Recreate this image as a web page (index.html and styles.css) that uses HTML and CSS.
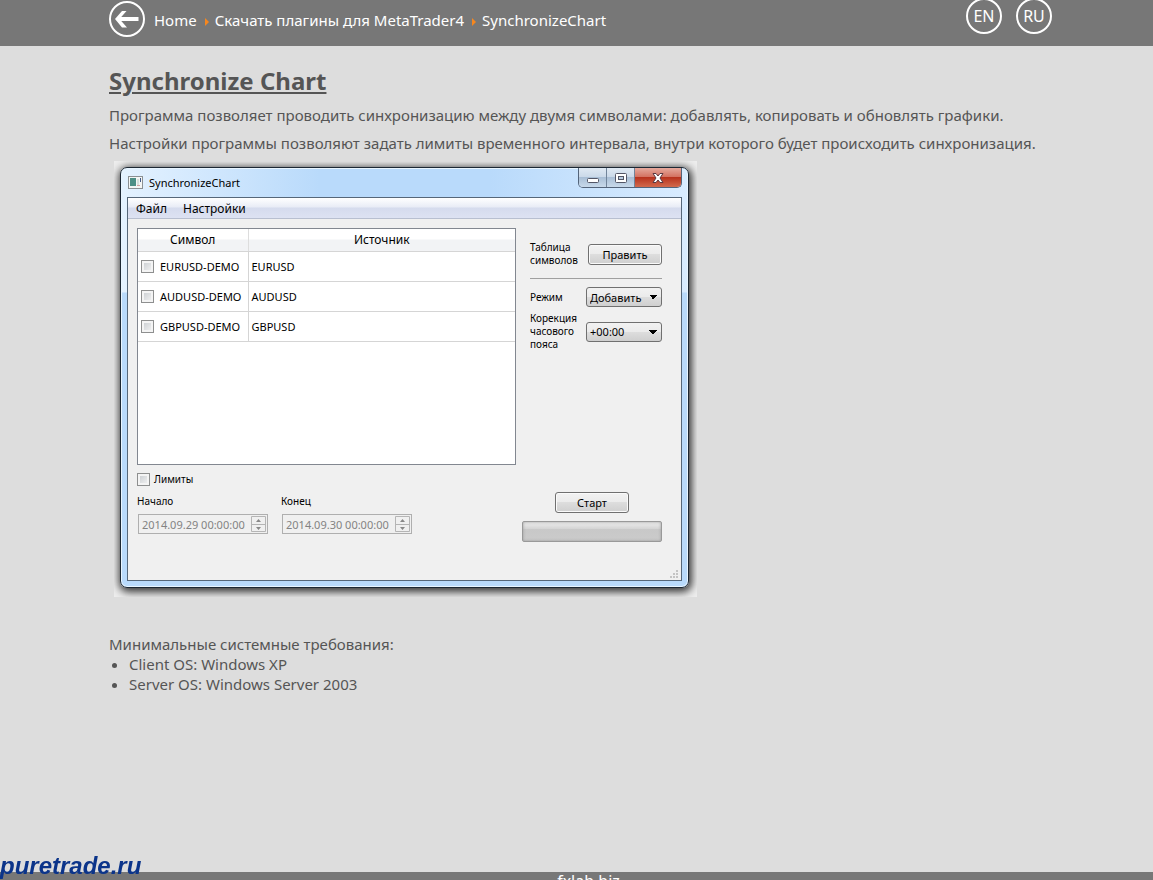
FILE: index.html
```
<!DOCTYPE html>
<html lang="ru">
<head>
  <meta charset="UTF-8">
  <meta name="viewport" content="width=device-width, initial-scale=1.0">
  <title>SynchronizeChart</title>
  <link rel="stylesheet" href="styles.css">
</head>
<body>

<!-- Top bar -->
<header class="topbar">
  <a class="back" href="#" aria-label="Назад">
    <svg width="36" height="36" viewBox="0 0 36 36" fill="none" stroke="#fff">
      <circle cx="18" cy="18" r="17" stroke-width="2"/>
      <path d="M29.500 18H9" stroke-width="4"/>
      <path d="M17.500 10H13L6 18L13 26.500H18L10.500 18Z" fill="#fff" stroke="none"/>
    </svg>
  </a>
  <nav class="crumbs">
    <a href="#">Home</a>
    <a href="#">Скачать плагины для MetaTrader4</a>
    <a href="#">SynchronizeChart</a>
  </nav>
  <div class="langs">
    <a href="#">EN</a>
    <a href="#">RU</a>
  </div>
</header>

<main class="content">
  <h1>Synchronize Chart</h1>
  <p>Программа позволяет проводить синхронизацию между двумя символами: добавлять, копировать и обновлять графики.</p>
  <p>Настройки программы позволяют задать лимиты временного интервала, внутри которого будет происходить синхронизация.</p>

  <!-- Program window -->
  <div class="shot">
    <div class="window">
      <div class="titlebar">
        <svg class="app-icon" width="15" height="13" viewBox="0 0 15 13">
          <rect x="0.500" y="0.500" width="14" height="12" fill="#f4f6f5" stroke="#8b9093"/>
          <rect x="2" y="2" width="6" height="8" fill="#4d8f86"/>
          <path d="M9 3h2v6h-2z" fill="#d5e0dc"/>
          <path d="M12 2h1v4h-1z" fill="#455b87"/>
          <path d="M9 9h3v1h-3z" fill="#d0a0a0"/>
        </svg>
        <span class="title">SynchronizeChart</span>
        <div class="win-buttons">
          <button type="button" aria-label="Свернуть">
            <svg width="14" height="12" viewBox="0 0 14 12"><rect x="1.500" y="6.500" width="11" height="4" rx="1" fill="#fff" stroke="#535666"/></svg>
          </button>
          <button type="button" aria-label="Развернуть">
            <svg width="14" height="12" viewBox="0 0 14 12" fill="#fff" stroke="#535666"><rect x="1.500" y="1.500" width="11" height="9" rx="1"/><rect x="4.500" y="4.500" width="5" height="3" fill="#b9cde0"/></svg>
          </button>
          <button type="button" class="close" aria-label="Закрыть">
            <svg width="14" height="12" viewBox="0 0 14 12"><path d="M2 1.500h3l2 2.500 2-2.500h3L9 6l3 4.500H9L7 8l-2 2.500H2L5 6z" fill="#fff" stroke="#5b3a42"/></svg>
          </button>
        </div>
      </div>

      <div class="client">
        <div class="menubar">
          <button type="button">Файл</button>
          <button type="button">Настройки</button>
        </div>
        <div class="panes">
          <div class="left">
            <div class="list">
              <table>
                <thead>
                  <tr><th class="symbol">Символ</th><th>Источник</th></tr>
                </thead>
                <tbody>
                  <tr>
                    <td><label><input type="checkbox">EURUSD-DEMO</label></td>
                    <td>EURUSD</td>
                  </tr>
                  <tr>
                    <td><label><input type="checkbox">AUDUSD-DEMO</label></td>
                    <td>AUDUSD</td>
                  </tr>
                  <tr>
                    <td><label><input type="checkbox">GBPUSD-DEMO</label></td>
                    <td>GBPUSD</td>
                  </tr>
                </tbody>
              </table>
            </div>
            <label class="limits"><input type="checkbox">Лимиты</label>
            <div class="dates">
              <div class="date">
                <label for="from">Начало</label>
                <div class="spin">
                  <input type="text" id="from" value="2014.09.29 00:00:00" disabled>
                  <svg width="15" height="16" viewBox="0 0 15 16"><path d="M0.500 0.500h14v15h-14zM0 8.500h15" fill="none" stroke="#b5b5b5"/><path d="M5 6l2.500-3L10 6zM5 11l2.500 3 2.500-3z" fill="#888"/></svg>
                </div>
              </div>
              <div class="date">
                <label for="to">Конец</label>
                <div class="spin">
                  <input type="text" id="to" value="2014.09.30 00:00:00" disabled>
                  <svg width="15" height="16" viewBox="0 0 15 16"><path d="M0.500 0.500h14v15h-14zM0 8.500h15" fill="none" stroke="#b5b5b5"/><path d="M5 6l2.500-3L10 6zM5 11l2.500 3 2.500-3z" fill="#888"/></svg>
                </div>
              </div>
            </div>
          </div>

          <div class="right">
            <div class="options">
              <div class="row edit">
                <span>Таблица символов</span>
                <button type="button" class="btn">Править</button>
              </div>
              <div class="row mode">
                <label for="mode">Режим</label>
                <select id="mode"><option>Добавить</option></select>
              </div>
              <div class="row zone">
                <label for="zone">Корекция часового пояса</label>
                <select id="zone"><option>+00:00</option></select>
              </div>
            </div>
            <div class="run">
              <button type="button" class="btn">Старт</button>
              <div class="progress" role="progressbar" aria-label="Прогресс"></div>
            </div>
          </div>
        </div>
        <svg class="grip" width="8" height="8" viewBox="0 0 8 8" fill="#c4c4c4">
          <path d="M6 0h2v2h-2zM3 3h2v2h-2zM6 3h2v2h-2zM0 6h2v2h-2zM3 6h2v2h-2zM6 6h2v2h-2z"/>
        </svg>
      </div>
    </div>
  </div>

  <div class="requirements">
    Минимальные системные требования:
    <ul>
      <li>Client OS: Windows XP</li>
      <li>Server OS: Windows Server 2003</li>
    </ul>
  </div>
</main>

<footer class="footer"><a href="#">fxlab.biz</a></footer>
<div class="watermark">puretrade.ru</div>

</body>
</html>
```
FILE: styles.css
```
* { margin: 0; padding: 0; box-sizing: border-box; }
body {
  background: #ddd;
  color: #555;
  font: 15px/20px "Noto Sans", sans-serif;
  height: 100vh;
  overflow: hidden;
}
a { color: white; text-decoration: none; }
svg { display: block; flex-shrink: 0; }
button, input, select { font: inherit; color: inherit; }

/* Top bar */
.topbar {
  display: flex;
  align-items: flex-start;
  height: 46px;
  padding: 0 101px 0 109px;
  background: #777;
}
.back { margin-top: 1px; }
.crumbs {
  display: flex;
  flex: 1;
  margin: 10px 0 0 9px;
}
.crumbs a + a::before {
  content: "";
  display: inline-block;
  margin: 0 6px 0 8px;
  border: 4px solid transparent;
  border-left-color: #f7871e;
  border-right: 0;
}
.langs { display: flex; gap: 14px; }
.langs a {
  width: 36px;
  height: 36px;
  margin-top: -2px;
  border: 2px solid white;
  border-radius: 50%;
  font-size: 16px;
  line-height: 32px;
  text-align: center;
}

/* Content */
.content {
  min-height: calc(100vh - 54px);
  padding: 20px 101px 0 109px;
}
h1 {
  margin-bottom: 5px;
  font: bold 24px/30px "Noto Sans", sans-serif;
  text-decoration: underline;
}
.content p { line-height: 28px; }

/* Program window */
.shot {
  width: 583px;
  max-width: 100%;
  margin: 4px 0 0 5px;
  padding: 6px 8px 9px 6px;
  background: #eee;
  overflow: hidden;
}
.window {
  padding: 0 6px 6px;
  border: 1px solid #1c2733;
  border-radius: 7px;
  background: linear-gradient(to bottom, transparent 124px, #b9dafb 125px), linear-gradient(to right, #e4f2ff, #b9dafb 35%, #b9dafb 65%, #d9ecff);
  box-shadow: inset 0 0 0 1px #e8f5ff, 1px 2px 8px 2px #333;
  color: black;
  font-size: 11px;
  line-height: 13px;
}
.titlebar {
  display: flex;
  height: 29px;
}
.app-icon { margin: 8px 0 0 1px; }
.title {
  flex: 1;
  padding-left: 6px;
  line-height: 29px;
}
.win-buttons {
  display: flex;
  height: 20px;
  border: 1px solid #53647a;
  border-top: 0;
  border-radius: 0 0 5px 5px;
  overflow: hidden;
}
.win-buttons button {
  display: flex;
  align-items: center;
  justify-content: center;
  width: 28px;
  border: 0;
  border-right: 1px solid #71849a;
  background: linear-gradient(#dfe9f3, #c9d8e8 50%, #a9bfd6 50%, #c8d9ea);
}
.win-buttons .close {
  width: 46px;
  border-right: 0;
  background: linear-gradient(#e5a99d, #d3705f 48%, #b8331e 50%, #d26a4d);
}
.client {
  position: relative;
  height: 384px;
  border: 1px solid #566779;
  background: #f0f0f0;
}
.menubar {
  display: flex;
  gap: 16px;
  height: 21px;
  padding-left: 8px;
  border-bottom: 1px solid #b8bfd0;
  background: linear-gradient(#fff, #e8ecf6 45%, #d5dbed 50%, #dde2f2);
  font-size: 12px;
}
.menubar button { border: 0; background: none; }
.panes {
  display: flex;
  gap: 6px;
  padding: 9px 19px 0 9px;
}
.left { flex: 1; }

/* Symbols table */
.list {
  height: 237px;
  border: 1px solid #828790;
  background: white;
}
table {
  width: 100%;
  border-collapse: collapse;
  table-layout: fixed;
}
th {
  height: 22px;
  border-bottom: 1px solid #d5d5d5;
  background: linear-gradient(#fff 45%, #f2f3f5 50%);
  font-size: 12px;
  font-weight: normal;
}
.symbol { width: 110px; }
th + th { border-left: 1px solid #ddd; }
td {
  height: 30px;
  padding-left: 3px;
  border-bottom: 1px solid #d5d5d5;
  white-space: nowrap;
}
td + td { border-left: 1px solid #d5d5d5; }
label { display: block; }
td label, .limits {
  display: flex;
  align-items: center;
  gap: 6px;
}
input[type="checkbox"] {
  appearance: none;
  flex-shrink: 0;
  width: 13px;
  height: 13px;
  border: 1px solid #8e8f8f;
  background: linear-gradient(135deg, #c5c9cd, #f6f6f6);
  box-shadow: inset 0 0 0 2px #f4f4f4;
}
.limits {
  gap: 4px;
  margin-top: 8px;
  font-size: 10px;
}

/* Date fields */
.dates {
  display: flex;
  gap: 13px;
  padding: 9px 0 8px;
}
.date label { font-size: 10px; }
.spin {
  display: flex;
  align-items: center;
  width: 130px;
  height: 20px;
  margin: 6px 0 0 1px;
  padding-right: 1px;
  border: 1px solid #afafaf;
}
.spin input {
  flex: 1;
  min-width: 0;
  padding-left: 3px;
  border: 0;
  background: none;
  color: #838383;
}

/* Options */
.right {
  display: flex;
  flex-direction: column;
  justify-content: space-between;
  width: 140px;
  padding-top: 13px;
}
.options { padding-left: 8px; }
.row {
  display: flex;
  align-items: center;
  justify-content: space-between;
}
.row > :first-child {
  width: 56px;
  font-size: 10px;
}
.edit {
  padding-bottom: 11px;
  border-bottom: 1px solid #a0a0a0;
}
.mode { padding: 8px 0 5px; }
.btn {
  width: 74px;
  height: 21px;
  border: 1px solid #707070;
  border-radius: 3px;
  background: linear-gradient(#f2f2f2, #ebebeb 48%, #ddd 50%, #cfcfcf);
  box-shadow: inset 0 0 0 1px #fafafa;
}
select {
  appearance: none;
  width: 76px;
  height: 20px;
  padding-left: 3px;
  border: 1px solid #707070;
  border-radius: 3px;
  background: conic-gradient(from -45deg at 50% 100%, black 90deg, transparent 0) 62px 7px / 8px 4px no-repeat, linear-gradient(#f2f2f2, #ebebeb 48%, #ddd 50%, #cfcfcf);
}
.run { text-align: center; }
.progress {
  height: 21px;
  margin-top: 8px;
  border: 1px solid #999;
  border-radius: 2px;
  background: linear-gradient(#eee, #d5d5d5 35%, #c8c8c8 40%, #cbcbcb);
  box-shadow: inset 0 0 3px #999;
}
.grip {
  position: absolute;
  right: 3px;
  bottom: 2px;
}

.requirements { margin-top: 37px; }
.requirements ul { padding-left: 20px; }

/* Footer */
.footer {
  height: 46px;
  background: #777;
  font-size: 16px;
  line-height: 18px;
  text-align: center;
}
.footer a { margin-left: 24px; }
.watermark {
  position: fixed;
  left: 0;
  bottom: 0;
  color: #0b348a;
  font: italic bold 24px/28px "Liberation Sans", sans-serif;
}
```
